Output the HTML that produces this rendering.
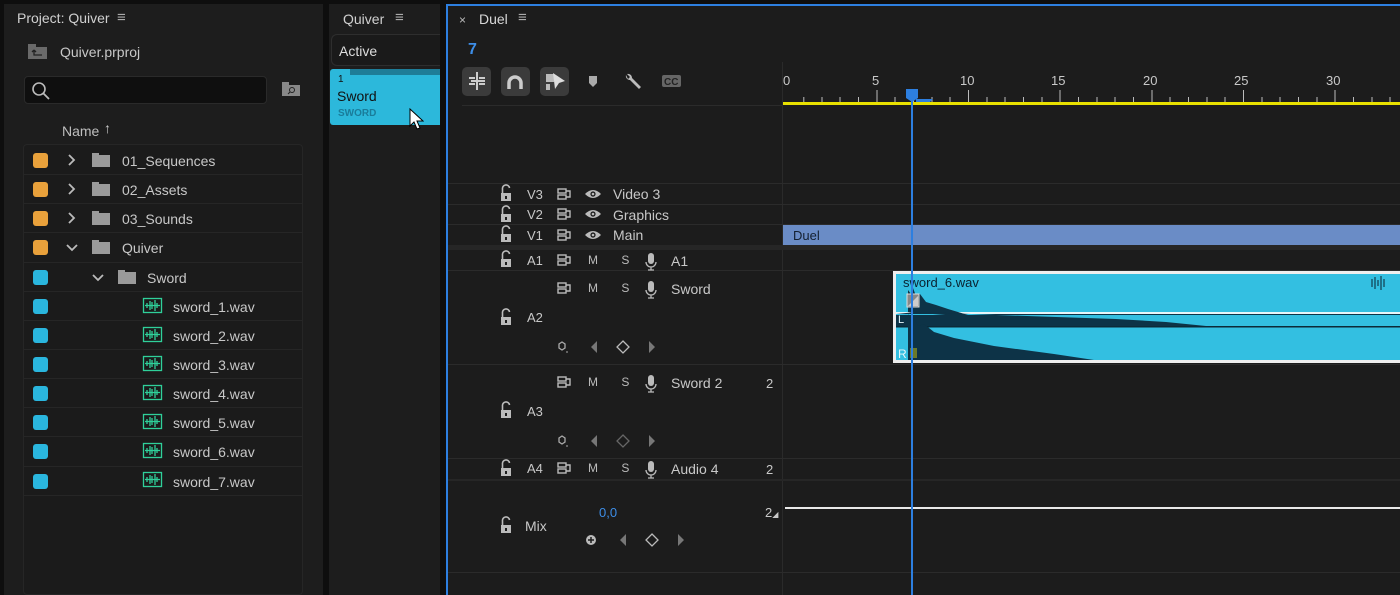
<!DOCTYPE html>
<html><head><meta charset="utf-8"><style>
*{margin:0;padding:0;box-sizing:border-box}
body{width:1400px;height:595px;background:#0e0e0e;position:relative;overflow:hidden;font-family:"Liberation Sans",sans-serif;color:#c8c8c8;font-size:14px}
.a{position:absolute}
.t{position:absolute;white-space:nowrap;line-height:1}
.sq{position:absolute;width:15px;height:15px;border-radius:3px}
.or{background:#e9a13b}.cy{background:#2ab6de}
.row{position:absolute;left:24px;width:278px;height:1px;background:#262626}
.hl{position:absolute;height:1px;background:#2b2b2b}
.btn{position:absolute;top:67px;width:29px;height:29px;border-radius:5px;background:#3b3b3b}
</style></head><body>
<!-- Project panel -->
<div class="a" style="left:4px;top:4px;width:319px;height:591px;background:#1d1d1d"></div>
<div class="t" style="left:17px;top:11px;font-size:14px;color:#d0d0d0">Project: Quiver</div>
<div class="t" style="left:117px;top:10px;font-size:15px;color:#aaa">≡</div>
<svg class="a" style="left:28px;top:44px" width="20" height="16"><rect x="0" y="3" width="19" height="12" fill="#6a6a6a"/><rect x="0" y="0" width="8" height="3" fill="#6a6a6a"/><path d="M6 6v5h8M6 6l-2 2M6 6l2 2" stroke="#222" stroke-width="1.3" fill="none"/></svg>
<div class="t" style="left:60px;top:45px;color:#c8c8c8">Quiver.prproj</div>
<div class="a" style="left:24px;top:76px;width:243px;height:28px;border-radius:4px;background:#0f0f0f;border:1px solid #2a2a2a"></div>
<svg class="a" style="left:31px;top:81px" width="20" height="20"><circle cx="8" cy="8" r="6" stroke="#bbb" stroke-width="1.6" fill="none"/><path d="M12.5 12.5L18 18" stroke="#bbb" stroke-width="1.8"/></svg>
<svg class="a" style="left:282px;top:82px" width="19" height="15"><rect x="0" y="3" width="18" height="11" fill="#888"/><rect x="0" y="0" width="7" height="3" fill="#888"/><circle cx="10" cy="8" r="2.5" stroke="#222" fill="none"/><path d="M8 10l-2 2" stroke="#222"/></svg>
<div class="t" style="left:62px;top:124px;color:#bfbfbf">Name</div>
<div class="t" style="left:104px;top:121px;color:#ccc;font-size:14px;font-weight:bold">↑</div>
<div class="a" style="left:23px;top:144px;width:280px;height:451px;background:#1b1b1b;border:1px solid #262626;border-radius:4px"></div>
<div class="row" style="top:174px"></div><div class="row" style="top:203px"></div><div class="row" style="top:232px"></div><div class="row" style="top:262px"></div><div class="row" style="top:291px"></div><div class="row" style="top:320px"></div><div class="row" style="top:349px"></div><div class="row" style="top:378px"></div><div class="row" style="top:407px"></div><div class="row" style="top:436px"></div><div class="row" style="top:466px"></div><div class="row" style="top:495px"></div>
<div class="sq or" style="left:33px;top:153px"></div><div class="sq or" style="left:33px;top:182px"></div><div class="sq or" style="left:33px;top:211px"></div><div class="sq or" style="left:33px;top:240px"></div>
<div class="sq cy" style="left:33px;top:270px"></div><div class="sq cy" style="left:33px;top:299px"></div><div class="sq cy" style="left:33px;top:328px"></div><div class="sq cy" style="left:33px;top:357px"></div><div class="sq cy" style="left:33px;top:386px"></div><div class="sq cy" style="left:33px;top:415px"></div><div class="sq cy" style="left:33px;top:444px"></div><div class="sq cy" style="left:33px;top:474px"></div>
<svg class="a" style="left:0;top:0" width="320" height="595">
<g stroke="#bbb" stroke-width="1.8" fill="none"><path d="M69 155l5 5-5 5M69 184l5 5-5 5M69 213l5 5-5 5M67 245l5 5 5-5M93 275l5 5 5-5"/></g>
<g fill="#9a9a9a"><path d="M92 155h18v12h-18zM92 153h7v2h-7z"/><path d="M92 184h18v12h-18zM92 182h7v2h-7z"/><path d="M92 213h18v12h-18zM92 211h7v2h-7z"/><path d="M92 242h18v12h-18zM92 240h7v2h-7z"/><path d="M118 272h18v12h-18zM118 270h7v2h-7z"/></g>
<g stroke="#2fd09a" stroke-width="1.3" fill="none">
<g id="w"><rect x="143.5" y="298.5" width="18" height="14"/><path d="M145 305.5h15M147 303v5M150 301v9M152 302v7M155 300v11M157 303v5"/></g>
<use href="#w" y="29"/><use href="#w" y="58"/><use href="#w" y="87"/><use href="#w" y="116"/><use href="#w" y="145"/><use href="#w" y="174"/>
</g></svg>
<div class="t" style="left:122px;top:154px">01_Sequences</div>
<div class="t" style="left:122px;top:183px">02_Assets</div>
<div class="t" style="left:122px;top:212px">03_Sounds</div>
<div class="t" style="left:122px;top:241px">Quiver</div>
<div class="t" style="left:147px;top:271px">Sword</div>
<div class="t" style="left:173px;top:300px">sword_1.wav</div>
<div class="t" style="left:173px;top:329px">sword_2.wav</div>
<div class="t" style="left:173px;top:358px">sword_3.wav</div>
<div class="t" style="left:173px;top:387px">sword_4.wav</div>
<div class="t" style="left:173px;top:416px">sword_5.wav</div>
<div class="t" style="left:173px;top:445px">sword_6.wav</div>
<div class="t" style="left:173px;top:475px">sword_7.wav</div>
<!-- Quiver panel -->
<div class="a" style="left:329px;top:4px;width:111px;height:591px;background:#1d1d1d"></div>
<div class="t" style="left:343px;top:12px;color:#d0d0d0">Quiver</div>
<div class="t" style="left:395px;top:10px;font-size:15px;color:#aaa">≡</div>
<div class="a" style="left:331px;top:34px;width:109px;height:32px;border:1px solid #2e2e2e;border-right:none;border-radius:6px 0 0 6px;background:#1a1a1a"></div>
<div class="t" style="left:339px;top:44px;color:#ddd">Active</div>
<div class="a" style="left:330px;top:69px;width:110px;height:56px;background:#2cb8db;border-radius:3px 0 0 3px"></div>
<div class="a" style="left:350px;top:69px;width:90px;height:6px;background:#1e7d98"></div>
<div class="t" style="left:338px;top:75px;font-size:10px;color:#111">1</div>
<div class="t" style="left:337px;top:89px;color:#111">Sword</div>
<div class="t" style="left:338px;top:109px;font-size:10px;font-weight:bold;color:#1a7c9a">SWORD</div>
<svg class="a" style="left:408px;top:107px" width="16" height="24"><path d="M2 2v17l4-4 3 7 3-1-3-7h6z" fill="#fff" stroke="#000"/></svg>
<!-- Duel panel -->
<div class="a" style="left:446px;top:4px;width:954px;height:591px;background:#1c1c1c;border-left:2px solid #2d7fe0;border-top:2px solid #2d7fe0"></div>
<div class="t" style="left:459px;top:14px;font-size:12px;color:#bbb">×</div>
<div class="t" style="left:479px;top:12px;color:#d8d8d8">Duel</div>
<div class="t" style="left:518px;top:10px;font-size:15px;color:#aaa">≡</div>
<div class="t" style="left:468px;top:42px;font-size:16px;font-weight:bold;color:#3d8ee8">7</div>
<div class="btn" style="left:462px"></div><div class="btn" style="left:501px"></div><div class="btn" style="left:540px"></div>
<svg class="a" style="left:0;top:0" width="782" height="110">
<g stroke="#ccc" stroke-width="2" fill="none"><path d="M477 72v18M469 78h6M479 78h6M469 84h6M479 84h6M471 81h14"/></g>
<path d="M509 89v-6a6 6 0 0 1 12 0v6" stroke="#ccc" stroke-width="3.5" fill="none"/>
<path d="M546 74h8v8h-8zM546 84h4v6h-4z" fill="#bbb"/><path d="M553 73l12 8-6 2 -4 6z" fill="#ddd"/>
<path d="M589 76h8v7l-4 4-4-4z" fill="#aaa"/>
<path d="M626 75a4 4 0 0 0 4 5l9 9 2-2-9-9a4 4 0 0 0-5-4l3 3-2 2z" fill="#bbb"/>
<rect x="662" y="75" width="19" height="12" rx="2" fill="#666"/><text x="664" y="85" font-size="10" font-weight="bold" fill="#222" font-family="Liberation Sans">CC</text>
</svg>
<div class="hl" style="left:462px;top:105px;width:320px"></div>
<!-- ruler -->
<svg class="a" style="left:783px;top:60px" width="617" height="50">
<g fill="#c8c8c8" font-size="13" font-family="Liberation Sans">
<text x="0" y="25">0</text><text x="89" y="25">5</text><text x="177" y="25">10</text><text x="268" y="25">15</text><text x="360" y="25">20</text><text x="451" y="25">25</text><text x="543" y="25">30</text></g>
<g stroke="#bbb" stroke-width="1">
<path d="M20.8 37v5M39 37v5M57 37v5M75.5 37v5M94 30v12M112 37v5M130.5 37v5M149 37v5M167 37v5M185.5 30v12M204 37v5M222 37v5M240.5 37v5M259 37v5M277 30v12M295.5 37v5M314 37v5M332 37v5M350.5 37v5M369 30v12M387 37v5M405.5 37v5M424 37v5M442 37v5M460.5 30v12M479 37v5M497 37v5M515.5 37v5M534 37v5M552 30v12M570.5 37v5M589 37v5M607 37v5"/></g>
<rect x="0" y="42" width="617" height="3" fill="#e8e000"/>
<path d="M123 29h12v9l-6 4-6-4z" fill="#2d7fe0"/><path d="M133 39h17l-3 3h-14z" fill="#2d7fe0"/>
</svg>
<div class="a" style="left:782px;top:62px;width:1px;height:533px;background:#2a2a2a"></div>
<!-- track rows -->
<div class="hl" style="left:448px;top:183px;width:952px"></div>
<div class="hl" style="left:448px;top:204px;width:952px"></div>
<div class="hl" style="left:448px;top:224px;width:952px"></div>
<div class="a" style="left:448px;top:245px;width:952px;height:5px;background:#262626"></div>
<div class="hl" style="left:448px;top:270px;width:952px"></div>
<div class="hl" style="left:448px;top:364px;width:952px"></div>
<div class="hl" style="left:448px;top:458px;width:952px"></div>
<div class="a" style="left:448px;top:479px;width:952px;height:2px;background:#262626"></div>
<div class="hl" style="left:448px;top:572px;width:952px"></div>
<svg class="a" style="left:0;top:0" width="800" height="595">
<defs>
<g id="lk"><path d="M-3.5 -1v-4a3.5 3.5 0 0 1 7 -1" stroke="#bbb" stroke-width="1.6" fill="none"/><rect x="-5" y="-1" width="10" height="8" fill="#bbb"/><rect x="-1" y="2" width="2" height="3" fill="#1c1c1c"/></g>
<g id="sy" fill="none" stroke="#bbb" stroke-width="1.4"><rect x="-6" y="-5" width="8" height="4"/><rect x="-6" y="1" width="8" height="4"/><path d="M2 -3h4v6h-4"/></g>
<g id="ey"><path d="M-8 0q8-8 16 0q-8 8-16 0z" fill="#bbb"/><circle r="2.6" fill="#1c1c1c"/><circle r="1.3" fill="#bbb"/></g>
<g id="mc"><rect x="-3" y="-9" width="6" height="11" rx="3" fill="#bbb"/><path d="M-5 0a5 5 0 0 0 10 0M0 5v3M-3 8h6" stroke="#bbb" stroke-width="1.3" fill="none"/></g>
<g id="kf"><path d="M-3 -3l3 -2 3 2v4l-3 2-3-2z" stroke="#aaa" stroke-width="1.3" fill="none"/><path d="M4 5h2" stroke="#aaa"/></g>
</defs>
<use href="#lk" x="506" y="194"/><use href="#lk" x="506" y="215"/><use href="#lk" x="506" y="235"/><use href="#lk" x="506" y="260"/><use href="#lk" x="506" y="318"/><use href="#lk" x="506" y="411"/><use href="#lk" x="506" y="469"/><use href="#lk" x="506" y="526"/>
<use href="#sy" x="564" y="194"/><use href="#sy" x="564" y="214"/><use href="#sy" x="564" y="235"/><use href="#sy" x="564" y="260"/><use href="#sy" x="564" y="288"/><use href="#sy" x="564" y="382"/><use href="#sy" x="564" y="468"/>
<use href="#ey" x="593" y="194"/><use href="#ey" x="593" y="214"/><use href="#ey" x="593" y="235"/>
<use href="#mc" x="651" y="262"/><use href="#mc" x="651" y="290"/><use href="#mc" x="651" y="384"/><use href="#mc" x="651" y="470"/>
<use href="#kf" x="562" y="347"/><use href="#kf" x="562" y="441"/>
<g fill="#777"><path d="M597 341v12l-6-6zM649 341v12l6-6zM597 435v12l-6-6zM649 435v12l6-6zM626 534v12l-6-6zM678 534v12l6-6z"/></g>
<g fill="none" stroke-width="1.3"><path d="M623 341l6 6-6 6-6-6z" stroke="#bbb"/><path d="M623 435l6 6-6 6-6-6z" stroke="#666"/><path d="M652 534l6 6-6 6-6-6z" stroke="#bbb"/></g>
<circle cx="591" cy="540" r="5" fill="#bbb"/><path d="M588 540h6M591 537v6" stroke="#1c1c1c" stroke-width="1.5"/>
</svg>
<div class="t" style="left:527px;top:188px;color:#c8c8c8;font-size:13px">V3</div>
<div class="t" style="left:527px;top:208px;color:#c8c8c8;font-size:13px">V2</div>
<div class="t" style="left:527px;top:229px;color:#c8c8c8;font-size:13px">V1</div>
<div class="t" style="left:527px;top:254px;color:#c8c8c8;font-size:13px">A1</div>
<div class="t" style="left:527px;top:311px;color:#c8c8c8;font-size:13px">A2</div>
<div class="t" style="left:527px;top:405px;color:#c8c8c8;font-size:13px">A3</div>
<div class="t" style="left:527px;top:462px;color:#c8c8c8;font-size:13px">A4</div>
<div class="t" style="left:525px;top:519px;color:#c8c8c8">Mix</div>
<div class="t" style="left:613px;top:187px">Video 3</div>
<div class="t" style="left:613px;top:208px">Graphics</div>
<div class="t" style="left:613px;top:228px">Main</div>
<div class="t" style="left:671px;top:254px">A1</div>
<div class="t" style="left:671px;top:282px">Sword</div>
<div class="t" style="left:671px;top:376px">Sword 2</div>
<div class="t" style="left:671px;top:462px">Audio 4</div>
<div class="t" style="left:588px;top:254px;font-size:12px;color:#bbb">M&nbsp;&nbsp;&nbsp;&nbsp;&nbsp;&nbsp;&nbsp;S</div>
<div class="t" style="left:588px;top:282px;font-size:12px;color:#bbb">M&nbsp;&nbsp;&nbsp;&nbsp;&nbsp;&nbsp;&nbsp;S</div>
<div class="t" style="left:588px;top:376px;font-size:12px;color:#bbb">M&nbsp;&nbsp;&nbsp;&nbsp;&nbsp;&nbsp;&nbsp;S</div>
<div class="t" style="left:588px;top:462px;font-size:12px;color:#bbb">M&nbsp;&nbsp;&nbsp;&nbsp;&nbsp;&nbsp;&nbsp;S</div>
<div class="t" style="left:766px;top:377px;font-size:13px">2</div>
<div class="t" style="left:766px;top:463px;font-size:13px">2</div>
<div class="t" style="left:765px;top:506px;font-size:13px">2<span style="font-size:8px">◢</span></div>
<div class="t" style="left:599px;top:506px;font-size:13px;color:#3d8ee8">0,0</div>
<!-- clips -->
<div class="a" style="left:783px;top:225px;width:617px;height:20px;background:#6a8cc6"></div>
<div class="t" style="left:793px;top:229px;color:#142030;font-size:13px">Duel</div>
<div class="a" style="left:785px;top:507px;width:615px;height:2px;background:#e8e8e8"></div>
<div class="a" style="left:893px;top:271px;width:507px;height:92px;background:#eee"></div>
<div class="a" style="left:896px;top:274px;width:504px;height:86px;background:#33bfe1"></div>
<svg class="a" style="left:896px;top:274px" width="504" height="86">
<rect x="0" y="38" width="504" height="2" fill="#e8f6fa"/>
<rect x="0" y="40" width="504" height="13" fill="#33bfe1"/>
<rect x="0" y="52" width="504" height="1.5" fill="#0c2a38"/>
<path d="M12 38V16l3 4 2-6 3 8 4-2 6 8 10 3 12 4 20 6 12 2 15 2z" fill="#0d3347"/>
<path d="M0 40h504v1H0zM0 40v12h310l-40-4-50-3-60-2-60-2-50-2-30-1z" fill="#0d3347"/>
<path d="M12 86V40l3 8 3-4 4 8 6-2 10 8 20 6 40 8 60 8 40 6z" fill="#0d3347"/>
<rect x="11" y="20" width="12" height="13" fill="#888" stroke="#ddd"/><path d="M12 32l10-10v10z" fill="#ccc"/>
<rect x="14" y="74" width="7" height="10" fill="#6a7a2a"/>
<text x="2" y="84" font-size="12" fill="#e8f6fa" font-family="Liberation Sans">R</text>
<text x="2" y="49" font-size="11" fill="#e8f6fa" font-family="Liberation Sans">L</text>
<text x="7" y="13" font-size="13" fill="#0a2230" font-family="Liberation Sans">sword_6.wav</text>
<path d="M476 5v8M479 3v12M482 6v6M485 2v14M488 5v8" stroke="#0a2230" stroke-width="1"/>
</svg>
<div class="a" style="left:911px;top:100px;width:2px;height:495px;background:#2d7fe0"></div>
</body></html>
